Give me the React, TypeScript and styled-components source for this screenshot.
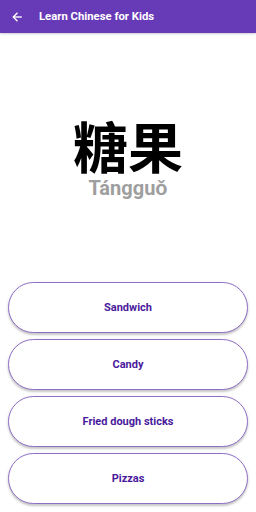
import React from "react";
import styled, { createGlobalStyle } from "styled-components";

const Global = createGlobalStyle`
  html, body { margin: 0; padding: 0; background: #ffffff; }
  body { font-family: Roboto, "Noto Sans", Arial, sans-serif; }
  * { box-sizing: border-box; }
`;

const Page = styled.div`
  width: 256px;
  height: 512px;
  display: flex;
  flex-direction: column;
  background: #ffffff;
`;

const AppBar = styled.header`
  height: 33px;
  flex: none;
  background: #673ab7;
  display: flex;
  align-items: center;
  padding-left: 12px;
  gap: 17px;
  box-shadow: 0 1px 2px rgba(0, 0, 0, 0.2);
`;

const BackButton = styled.span`
  display: flex;
  width: 10px;
  height: 10px;
  color: #ffffff;
`;

const Title = styled.h1`
  margin: 0;
  color: #ffffff;
  font-size: 11.3px;
  font-weight: 700;
  font-family: Roboto, Arial, sans-serif;
  letter-spacing: 0;
`;

const WordArea = styled.main`
  flex: 1;
  display: flex;
  flex-direction: column;
  align-items: center;
  justify-content: center;
`;

const Hanzi = styled.div`
  font-family: "Noto Sans CJK SC", "Noto Sans CJK TC", sans-serif;
  font-weight: 700;
  font-size: 55px;
  line-height: 56px;
  color: #000000;
`;

const Pinyin = styled.div`
  font-family: Roboto, Arial, sans-serif;
  font-weight: 700;
  font-size: 20px;
  line-height: 22px;
  color: #9e9e9e;
  margin-top: 5px;
`;

const Choices = styled.div`
  display: flex;
  flex-direction: column;
  gap: 6px;
  padding: 0 8px 8px 8px;
`;

const Choice = styled.button`
  height: 51px;
  width: 100%;
  border: 1px solid #8e6fc6;
  border-radius: 26px;
  background: #ffffff;
  box-shadow: 0 2px 2px rgba(0, 0, 0, 0.18), 0 1px 4px rgba(0, 0, 0, 0.08);
  color: #4a1a9c;
  font-family: Roboto, Arial, sans-serif;
  font-weight: 700;
  font-size: 11px;
  display: flex;
  align-items: center;
  justify-content: center;
  padding: 0;
  cursor: pointer;
`;

const options = ["Sandwich", "Candy", "Fried dough sticks", "Pizzas"];

export default function App() {
  return (
    <>
      <Global />
      <Page>
        <AppBar>
          <BackButton>
            <svg viewBox="0 0 24 24" width="10" height="10" fill="none" stroke="#fff" strokeWidth="3.2" strokeLinecap="square">
              <path d="M22 12H4" />
              <path d="M12 3L3 12L12 21" />
            </svg>
          </BackButton>
          <Title>Learn Chinese for Kids</Title>
        </AppBar>
        <WordArea>
          <Hanzi>糖果</Hanzi>
          <Pinyin>Tángguǒ</Pinyin>
        </WordArea>
        <Choices>
          {options.map((o) => (
            <Choice key={o}>{o}</Choice>
          ))}
        </Choices>
      </Page>
    </>
  );
}
